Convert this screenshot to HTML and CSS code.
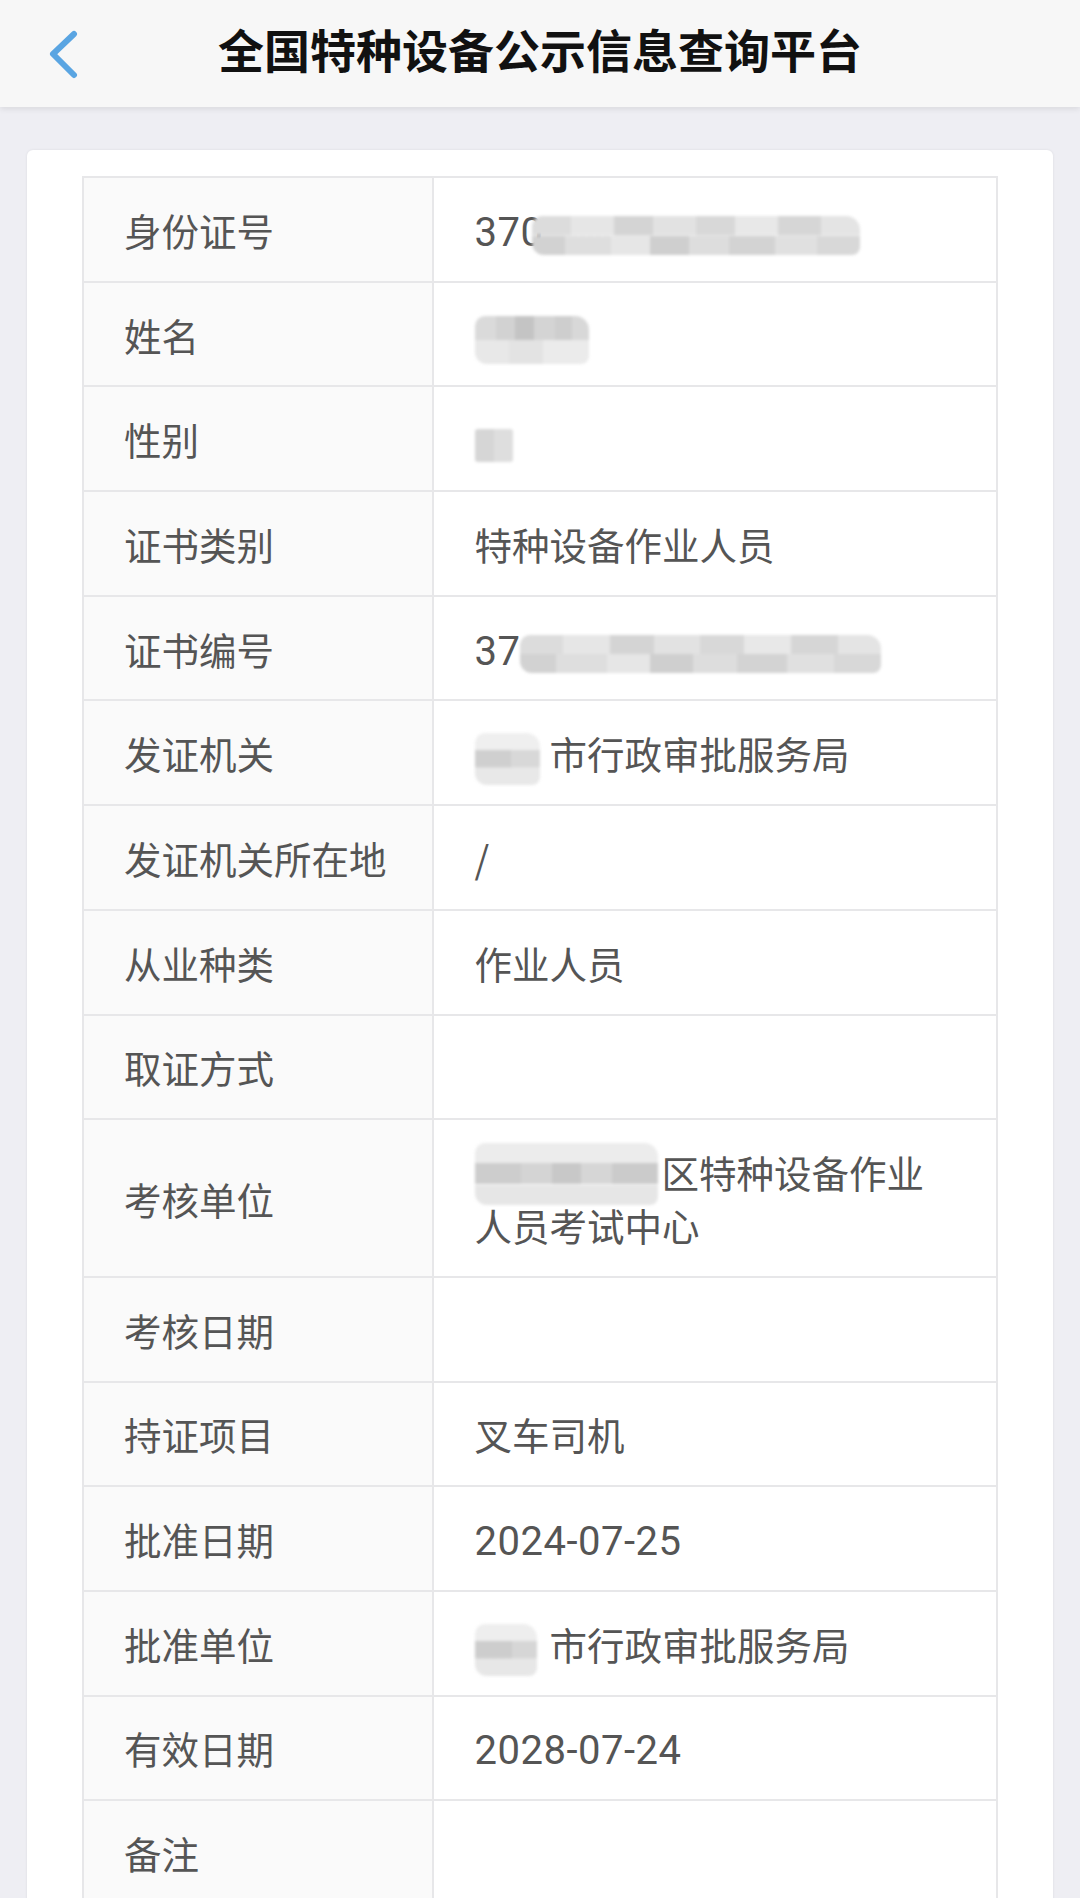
FILE: index.html
```html
<!DOCTYPE html>
<html lang="zh-CN">
<head>
<meta charset="utf-8">
<title>全国特种设备公示信息查询平台</title>
<link rel="stylesheet" href="styles.css">
</head>
<body>
<header class="topbar">
  <div class="back">
    <svg class="back-icon" viewBox="0 0 40 50" width="40" height="50">
      <path d="M30 4 L9 24 L30 45" fill="none" stroke="#5aa5e2" stroke-width="6" stroke-linecap="round" stroke-linejoin="round"/>
    </svg>
  </div>
  <h1 class="title">全国特种设备公示信息查询平台</h1>
  <div class="spacer"></div>
</header>
<main class="card">
  <table class="info">
    <colgroup><col class="c-label"><col class="c-value"></colgroup>
    <tbody>
      <tr><th>身份证号</th><td><span class="num">370</span><span class="mosaic m-id"></span></td></tr>
      <tr><th>姓名</th><td><span class="mosaic m-name"></span></td></tr>
      <tr><th>性别</th><td><span class="mosaic m-sex"></span></td></tr>
      <tr><th>证书类别</th><td>特种设备作业人员</td></tr>
      <tr><th>证书编号</th><td><span class="num">37</span><span class="mosaic m-cert"></span></td></tr>
      <tr><th>发证机关</th><td><span class="mosaic m-org"></span>市行政审批服务局</td></tr>
      <tr><th>发证机关所在地</th><td>/</td></tr>
      <tr><th>从业种类</th><td>作业人员</td></tr>
      <tr><th>取证方式</th><td></td></tr>
      <tr><th>考核单位</th><td><span class="mosaic m-exam"></span>区特种设备作业<br>人员考试中心</td></tr>
      <tr><th>考核日期</th><td></td></tr>
      <tr><th>持证项目</th><td>叉车司机</td></tr>
      <tr><th>批准日期</th><td><span class="num">2024-07-25</span></td></tr>
      <tr><th>批准单位</th><td><span class="mosaic m-appr"></span>市行政审批服务局</td></tr>
      <tr><th>有效日期</th><td><span class="num">2028-07-24</span></td></tr>
      <tr><th>备注</th><td></td></tr>
    </tbody>
  </table>
</main>
</body>
</html>
```
FILE: styles.css
```css
html, body {
  margin: 0;
  padding: 0;
}
body {
  background: #eeeef3;
  font-family: "Noto Sans CJK SC", "Noto Sans", sans-serif;
  color: #555;
  overflow: hidden;
}
.topbar {
  height: 107px;
  background: #f7f7f7;
  box-shadow: 0 2px 6px rgba(0, 0, 0, 0.09);
  display: grid;
  grid-template-columns: 1fr auto 1fr;
  align-items: center;
}
.back {
  padding-left: 44px;
  display: flex;
  align-items: center;
  padding-top: 2px;
}
.back-icon {
  display: block;
}
.title {
  margin: 0;
  padding-bottom: 12px;
  font-size: 46px;
  font-weight: 700;
  color: #111;
  letter-spacing: 0;
  line-height: 60px;
}
.card {
  display: block;
  margin: 43px 27px 0 27px;
  background: #fff;
  border-radius: 6px;
  box-shadow: 0 0 3px rgba(0, 0, 0, 0.08);
  padding: 26px 55px 40px;
}
.info {
  width: 100%;
  border-collapse: collapse;
  table-layout: fixed;
  font-size: 37.5px;
  line-height: 53px;
}
.c-label { width: 350px; }
.info th, .info td {
  border: 2px solid #e7e7e9;
  padding: 24.85px 20px 24.85px 40px;
  text-align: left;
  vertical-align: middle;
  font-weight: 400;
  color: #555;
}
.info th {
  background: #fafafa;
}
.info td {
  padding-left: 40.5px;
}
.num {
  font-family: Roboto, "Noto Sans", sans-serif;
  font-size: 40px;
  line-height: 1;
  letter-spacing: 0.5px;
  color: #555;
}
.mosaic {
  display: inline-block;
  vertical-align: middle;
  margin-top: -30px;
  margin-bottom: -30px;
  border-radius: 10px 14px 8px 12px;
  filter: blur(1.6px);
  background:
    linear-gradient(90deg, #dcdcdc 0 12%, #e6e6e6 12% 25%, #d4d4d4 25% 37%, #e2e2e2 37% 50%, #d8d8d8 50% 62%, #e8e8e8 62% 75%, #d6d6d6 75% 88%, #e4e4e4 88% 100%) top / 100% 50% no-repeat,
    linear-gradient(90deg, #d2d2d2 0 10%, #dedede 10% 24%, #e6e6e6 24% 36%, #cfcfcf 36% 48%, #dddddd 48% 60%, #d3d3d3 60% 74%, #e0e0e0 74% 87%, #d8d8d8 87% 100%) bottom / 100% 50% no-repeat;
}
.m-id {
  width: 328px;
  height: 39px;
  margin-left: -11px;
}
.m-name {
  width: 114px;
  height: 48px;
  background:
    linear-gradient(90deg, #dadada 0 18%, #d2d2d2 18% 35%, #c4c4c4 35% 52%, #d4d4d4 52% 70%, #cecece 70% 85%, #d8d8d8 85% 100%) top / 100% 50% no-repeat,
    linear-gradient(90deg, #e8e8e8 0 30%, #e3e3e3 30% 60%, #ebebeb 60% 100%) bottom / 100% 50% no-repeat;
}
.m-sex {
  width: 38px;
  height: 33px;
  border-radius: 3px;
  background: linear-gradient(90deg, #d6d6d6 0 50%, #dedede 50% 100%);
}
.m-cert {
  width: 361px;
  height: 38px;
}
.m-org {
  width: 65px;
  height: 52px;
  margin-right: 10px;
  background:
    linear-gradient(90deg, #cfcfcf 0 55%, #d8d8d8 55% 100%) center / 100% 34% no-repeat,
    linear-gradient(180deg, #efefef 0 33%, #fff0 33% 67%, #e8e8e8 67% 100%);
}
.m-exam {
  width: 183px;
  height: 62px;
  margin-right: 4px;
  margin-top: -34px;
  margin-bottom: -26px;
  background:
    linear-gradient(90deg, #cdcdcd 0 25%, #d4d4d4 25% 42%, #c8c8c8 42% 58%, #d6d6d6 58% 75%, #cbcbcb 75% 100%) center / 100% 34% no-repeat,
    linear-gradient(180deg, #ececec 0 33%, #fff0 33% 67%, #e6e6e6 67% 100%);
}
.m-appr {
  width: 62px;
  height: 52px;
  margin-right: 13px;
  background:
    linear-gradient(90deg, #cdcdcd 0 60%, #d6d6d6 60% 100%) center / 100% 34% no-repeat,
    linear-gradient(180deg, #eeeeee 0 33%, #fff0 33% 67%, #e7e7e7 67% 100%);
}
```
